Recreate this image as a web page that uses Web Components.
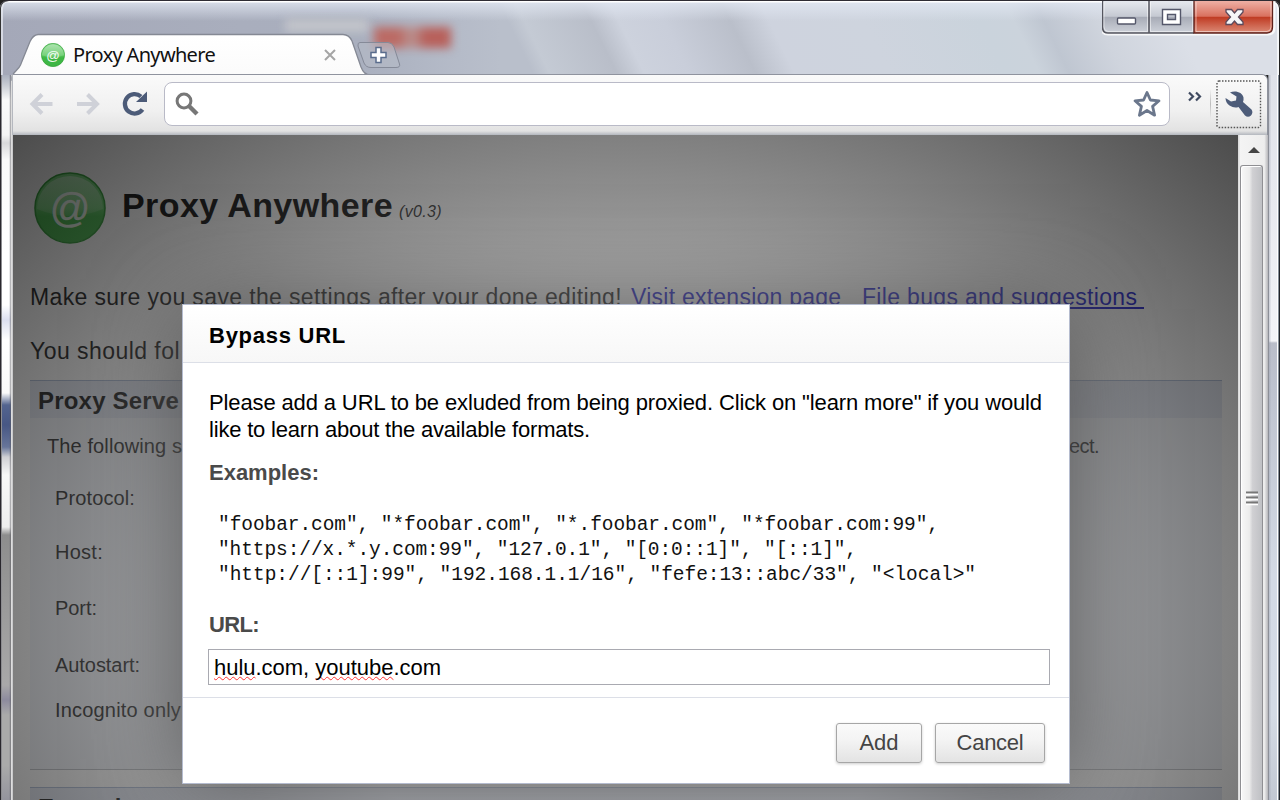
<!DOCTYPE html>
<html lang="en">
<head>
<meta charset="utf-8">
<title>Proxy Anywhere</title>
<style>
html,body{margin:0;width:1280px;height:800px;overflow:hidden;font-family:"Liberation Sans",Arial,sans-serif;background:#222}
</style>
</head>
<body>
<browser-window>
  <tab-strip slot="tabs">Proxy Anywhere</tab-strip>
  <nav-bar slot="toolbar"></nav-bar>
  <options-page slot="page"></options-page>
  <scroll-bar slot="scroll"></scroll-bar>
</browser-window>
<script>
function define(name, html, setup) {
  customElements.define(name, class extends HTMLElement {
    connectedCallback() {
      if (this.shadowRoot) return;
      this.attachShadow({mode: 'open'}).innerHTML = html;
      if (setup) setup(this, this.shadowRoot);
    }
  });
}

/* Window frame: glass title bar, side borders and content area */
define('browser-window', `<style>
:host{display:grid;position:relative;width:1280px;height:800px;grid-template-columns:12px 1px 1225px 26px 4px 12px;grid-template-rows:75px 60px 665px;overflow:hidden}
.title{grid-area:1/1/2/7;display:grid;grid-template-columns:1fr 178px;box-sizing:border-box;border-top:1px solid #2e2c34;position:relative;border-radius:8px 8px 0 0;
 box-shadow:inset 1px 0 #333,inset -1px 0 #222,inset 3px 0 rgba(235,238,245,.7),inset -3px 0 rgba(255,255,255,.7);
 background:
 linear-gradient(180deg,#fff 0 1px,rgba(226,232,243,.75) 2px,rgba(220,226,238,0) 20px),
 linear-gradient(90deg,#a4a8b8 0,#a9aebd 240px,#a9afbe 360px,rgba(178,184,198,.7) 450px,rgba(190,196,208,0) 500px),
 linear-gradient(64deg,#b9bfcb 0 480px,#c4cad4 495px,#b9bec9 555px,#cdd2dd 580px,#c9ceda 620px,#babfca 680px,#ced3de 715px,#ced4de 800px,#cad3dc 905px,#cbd3dc 935px,#bfc6d1 962px,#cfd4dd 1010px,#dbdfe7 1080px)}
.blur{position:absolute;filter:blur(5px)}
.b1{left:285px;top:18px;width:84px;height:13px;background:#c3c5cb}
.b2{left:374px;top:26px;width:77px;height:21px;background:linear-gradient(90deg,#bb6a64 0 25px,#b98a88 34px 42px,#b8605a 50px)}
.left{grid-area:2/1/4/2;background:linear-gradient(90deg,#29272d 0 1px,#8c8c90 1px 2px,transparent 2px 9px,rgba(90,90,100,.25) 10px,rgba(90,90,95,.65) 11px,#ddd 11px),
 linear-gradient(180deg,#aab0be 0,#c8ccd4 10px,#fafafa 25px,#f4f4f4 60px,#d9d9db 68px,#fafafa 85px,#fff 180px,#fff 230px,#dcdff0 245px,#fff 265px,#fafafa 318px,#53648f 330px,#475784 350px,#67759a 372px,#d0d0d4 382px,#f8f8f8 400px,#eee 452px,#8d8d8d 460px,#9c9c9c 540px,#a9a8a9 610px,#8d8b9e 625px,#aaa 640px,#aaa 690px,#94949d 725px)}
.right{grid-area:2/6/4/7;background:linear-gradient(90deg,#8c8f98 0 1px,rgba(150,155,170,.35) 1px 2px,transparent 3px 9px,#fff 9px 10px,#87909a 10px 11px,#202328 11px),
 linear-gradient(180deg,#dfe2e9 0,#e7e9ef 120px,#f3f4f8 266px,#b9bdc9 268px,#bfc4d0 320px,#d3dae5 500px,#d4dbe5 640px,#c2c8d3 725px)}
.bar{grid-area:2/1/3/7;margin:-1px 12px 0 12px;z-index:1}
.edge{grid-area:3/2/4/3;background:#c9c9cb}
.page{grid-area:3/3/4/4;overflow:hidden;position:relative}
.sb{grid-area:3/4/4/5}
.in{grid-area:3/5/4/6;background:linear-gradient(90deg,#f2f2f2,#b6b6ba)}
::slotted(*){height:100%}
</style>
<div class="title"><div class="blur b1"></div><div class="blur b2"></div><slot name="tabs"></slot><caption-buttons></caption-buttons></div>
<div class="left"></div><div class="right"></div>
<div class="bar"><slot name="toolbar"></slot></div>
<div class="edge"></div><div class="page"><slot name="page"></slot></div>
<div class="sb"><slot name="scroll"></slot></div><div class="in"></div>`);

/* Green round "@" badge */
define('at-badge', `<style>:host{display:block}svg{display:block;width:100%;height:100%}text{font:40px "Liberation Sans",sans-serif}</style>
<svg viewBox="0 0 72 72"><defs>
<linearGradient id="g" x2="0" y2="1"><stop offset="0" stop-color="#6fcf74"/><stop offset=".5" stop-color="#5cc961"/><stop offset=".62" stop-color="#3fb845"/><stop offset="1" stop-color="#3fb545"/></linearGradient>
<linearGradient id="h" x2="0" y2="1"><stop offset="0" stop-color="#fff" stop-opacity=".42"/><stop offset="1" stop-color="#fff" stop-opacity=".12"/></linearGradient></defs>
<circle cx="36" cy="36" r="35" fill="url(#g)" stroke="#2a9a30" stroke-width="1.6"/>
<text x="36" y="49.500" text-anchor="middle" fill="#fff" fill-opacity=".9" stroke="#fff" stroke-opacity=".6" stroke-width=".5">@</text>
<path d="M3 37a33 33 0 0 1 66 0Q52 44 36 44T3 37Z" fill="url(#h)"/></svg>`);

define('tab-strip', `<style>
:host{display:flex;position:relative;height:74px;padding-left:12px;align-items:flex-end}
.tab{display:grid;width:352px;height:41px;position:relative}
.tab>*{grid-area:1/1}
.row{display:flex;align-items:center;padding:0 0 0 29px;height:41px;font:20px/28px "Noto Sans","Open Sans",sans-serif;color:#111}
at-badge{width:24px;height:24px;margin-right:8px}
.x{margin-left:109px}
svg{display:block;overflow:visible}
.new{margin:0 0 6px -7px}
</style>
<div class="tab"><svg width="352" height="41"><defs><linearGradient id="t" x2="0" y2="1"><stop offset="0" stop-color="#fff"/><stop offset="1" stop-color="#fafafa"/></linearGradient></defs>
<path d="M0 43.500C0 38 6 37 8.500 31L18 7.500Q21 1 26 .5H331Q337 .5 340 7L349 33Q352 41 358 41V46H0Z" fill="url(#t)" stroke="#858994" stroke-width="1.300"/><path d="M1 41H360V47H1Z" fill="#fafafa"/></svg>
<div class="row"><at-badge></at-badge><fit-text w="142"><slot></slot></fit-text>
<svg class="x" width="12" height="12"><path d="M1 1L11 11M11 1L1 11" stroke="#a5a5a5" stroke-width="2"/></svg></div></div>
<svg class="new" width="44" height="27"><path d="M3 .5H31Q35 .5 37 5L42.500 22Q43.500 25.500 39 25.500H14Q9 25.500 7 21L1 4Q.5 .5 3 .5Z" fill="#b6bbc7" fill-opacity=".6" stroke="#858a98"/>
<path d="M19 5.500h5v5h5v5h-5v5h-5v-5h-5v-5h5z" fill="#fff" stroke="#5a6c8c" stroke-width="1.500"/></svg>`);

define('caption-buttons', `<style>:host{display:block}svg{display:block}</style>
<svg width="178" height="38"><defs>
<linearGradient id="a" x2="0" y2="1"><stop offset="0" stop-color="#e6e9ef"/><stop offset=".48" stop-color="#c5c9d2"/><stop offset=".5" stop-color="#a7abb6"/><stop offset="1" stop-color="#ced2da"/></linearGradient>
<linearGradient id="r" x2="0" y2="1"><stop offset="0" stop-color="#eeb0a5"/><stop offset=".48" stop-color="#d9705e"/><stop offset=".5" stop-color="#bf3a22"/><stop offset="1" stop-color="#dc8c78"/></linearGradient></defs>
<path d="M0 0V27Q0 33 6 33H166Q172 33 172 27V0" fill="none" stroke="#fff" stroke-opacity=".8" stroke-width="3"/>
<path d="M.5 0H47V32H6Q.5 32 .5 26Z" fill="url(#a)"/><path d="M47 0H92V32H47Z" fill="url(#a)"/><path d="M92 0H170V27Q170 32 165 32H92Z" fill="url(#r)"/>
<path d="M.5 0V26Q.5 32 6 32H92M47 0V32" fill="none" stroke="#55565f" stroke-width="1.500"/><path d="M92 0V32H165Q170.500 32 170.500 26V0" fill="none" stroke="#5d211b" stroke-width="1.300"/>
<path d="M2 1V26Q2 30 6 30.500H45.500V1M48.500 1V30.500H90.500V1M94 1V30.500H165Q169 30 169 26V1" fill="none" stroke="#fff" stroke-opacity=".5"/>
<rect x="15.500" y="17" width="18" height="6" rx="1" fill="#fff" stroke="#54576a" stroke-width="1.400"/>
<path d="M60.500 8.500h18v15h-18zM65.500 13.500v5h8v-5z" fill="#fff" fill-rule="evenodd" stroke="#54576a" stroke-width="1.400"/>
<path d="M124 8.500h5.500l3 3.500 3-3.500h5.500v2.500l-4.500 5 4.500 5v2.500h-5.500l-3-3.500-3 3.500H124V21l4.500-5-4.500-5z" fill="#f6f6f8" stroke="#5b4a5c" stroke-width="1.300"/>
</svg>`);

define('nav-bar', `<style>
:host{display:flex;box-sizing:border-box;height:61px;border:solid #8f939e;border-width:1px 1px 0 0;border-radius:0 6px 0 0;background:linear-gradient(#fafafa,#f0f0f0 60%,#e2e2e2 56px,#b3b7be 60px);align-items:center;border-left:1px solid #b5b8bf;padding-bottom:3px}
svg{display:block;flex:none;overflow:visible}
.omni{display:flex;align-items:center;justify-content:space-between;box-sizing:border-box;width:1006px;height:44px;border:1px solid #b9bac7;border-radius:8px;background:#fff;padding:0 8px 0 10px;margin-left:16px}
.more{margin:-15px 0 0 18px}
.sep{width:1px;height:30px;margin-left:8px;background:linear-gradient(transparent,#bbb,transparent)}
.wr{display:grid;flex:none;margin:1px 0 0 5px}
.wr>*{grid-area:1/1}
.wr .icon{place-self:center}
</style>
<svg width="24" height="24" style="margin-left:16px"><path d="M23.500 12H3.500M13 2.500L3.500 12L13 21.500" fill="none" stroke="#cfd1d8" stroke-width="4"/></svg>
<svg width="24" height="24" style="margin-left:23px"><path d="M1 12H21M11.500 2.500L21 12L11.500 21.500" fill="none" stroke="#cfd1d8" stroke-width="4"/></svg>
<svg width="26" height="26" style="margin-left:22px"><path d="M20.500 18.500A9.700 9.700 0 1 1 19 5.500" fill="none" stroke="#4c5b78" stroke-width="4.300"/><path d="M25 .5V11H14Z" fill="#4c5b78"/></svg>
<div class="omni"><svg width="24" height="24"><circle cx="9" cy="9" r="6.900" fill="none" stroke="#777" stroke-width="3"/><path d="M14 14L22 22" stroke="#777" stroke-width="4.500"/></svg>
<svg width="28" height="28"><path d="M14 2.500L17.400 10L26 10.800L19.600 16.400L21.600 25.200L14 20.500L6.400 25.200L8.400 16.400L2 10.800L10.600 10Z" fill="#fff" stroke="#6b778c" stroke-width="2.800" stroke-linejoin="round"/></svg></div>
<svg class="more" width="14" height="9"><path d="M1 .5L5 4.500L1 8.500M8 .5L12 4.500L8 8.500" fill="none" stroke="#3f4a60" stroke-width="2.200"/></svg>
<div class="sep"></div>
<div class="wr"><svg width="46" height="49"><rect x="1" y="1" width="43.500" height="46.500" rx="2" fill="none" stroke="#555" stroke-width="1.400" stroke-dasharray="1.500 1.500"/></svg>
<svg class="icon" width="28" height="28"><path d="M5 2.500C10 0 17.500 2 18.500 7.500Q18.800 10 18 12L26.500 19.500Q28.500 22.500 26 25.500Q23 28 20 25.500L13.500 17Q9 18.500 4.500 15.500Q.5 12.500 .5 8L6 11.500L11 10.500L11.500 6.500Z" fill="#4d5c79"/></svg></div>`);

define('scroll-bar', `<style>
:host{display:flex;flex-direction:column;align-items:stretch;box-sizing:border-box;height:665px;background:linear-gradient(90deg,#dcdcdc 0 1px,#f4f4f4 2px,#ededed)}
.up{height:30px;display:grid;place-items:center;padding-left:5px}
.th{flex:1;margin:0 1px 0 2px;border:1px solid #8f8f93;border-bottom:0;border-radius:3px 3px 0 0;background:linear-gradient(90deg,#f8f8f8,#ececec 40%,#d0d0d3 55%,#bfc0c4);display:grid;justify-items:center;padding-top:325px;box-sizing:border-box;align-content:start;box-shadow:inset 1px 1px #fff}
</style>
<div class="up"><svg width="14" height="8"><path d="M1 7L7 1L13 7Z" fill="#444"/></svg></div>
<div class="th"><svg width="14" height="15"><path d="M1 1.500H13M1 6.500H13M1 11.500H13" stroke="#777" stroke-width="2"/><path d="M1 3.500H13M1 8.500H13M1 13.500H13" stroke="#fff" stroke-width="1.500"/></svg></div>`);

define('options-page', `<style>
:host{display:block;position:relative;height:1000px!important;background:#fff;color:#222}
.body{display:flex;flex-direction:column;padding:37px 16px 0 17px}
.head{display:flex;height:72px;padding-left:4px}
.head at-badge{width:72px;height:72px;margin-right:16px}
h1{margin:13px 0 0;font-size:34px;line-height:40px;white-space:pre;color:#000}
i{font-size:16px;font-weight:400;margin-left:6px;color:#222}
p{margin:39px 0 0;font-size:23px;line-height:28px;white-space:pre;display:flex;color:#111}
p+p{margin-top:26px}
a{color:#11c;text-decoration:underline;text-decoration-thickness:1.500px;text-underline-offset:2px}
.shade{position:absolute;inset:0;background:radial-gradient(rgba(127,127,127,.5),rgba(127,127,127,.5) 35%,rgba(0,0,0,.7))}
bypass-dialog{position:absolute;left:169px;top:169px}
settings-section{margin-top:15px}
settings-section+settings-section{margin-top:17px}
.desc{display:flex;margin:14px 0 0 17px;height:28px}
dl{margin:24px 0 45px 25px;display:grid;row-gap:0}
dt{height:28px}
</style>
<div class="body">
<div class="head"><at-badge></at-badge><h1><fit-text w="271">Proxy Anywhere</fit-text><i><fit-text w="43">(v0.3)</fit-text></i></h1></div>
<p><fit-text w="592">Make sure you save the settings after your done editing!</fit-text><a style="margin-left:9px"><fit-text w="217">Visit extension page&nbsp;</fit-text></a><a style="margin-left:14px"><fit-text w="282">File bugs and suggestions&nbsp;</fit-text></a></p>
<p><fit-text w="150">You should fol</fit-text></p>
<settings-section><fit-text slot="title" w="141">Proxy Serve</fit-text>
<div class="desc"><fit-text w="135">The following s</fit-text><fit-text w="30" style="margin-left:887px">ect.</fit-text></div>
<dl><dt><fit-text w="80">Protocol:</fit-text></dt><dt style="margin-top:26px"><fit-text w="48">Host:</fit-text></dt><dt style="margin-top:28px"><fit-text w="42">Port:</fit-text></dt><dt style="margin-top:29px"><fit-text w="85">Autostart:</fit-text></dt><dt style="margin-top:17px"><fit-text w="126">Incognito only</fit-text></dt></dl>
</settings-section>
<settings-section><fit-text slot="title" w="125">Exceptions</fit-text></settings-section>
</div>
<div class="shade"></div>
<bypass-dialog></bypass-dialog>`);

define('settings-section', `<style>
:host{display:block;background:#f4f7fd;border-bottom:1px solid #b9bcc2;font-size:20px;line-height:28px;color:#222;box-sizing:border-box}
header{height:37px;border-top:1px solid #a8b8d4;background:#e3e8f4;font-weight:700;font-size:24px;line-height:40px;padding-left:8px;color:#111}
</style><header><slot name="title"></slot></header><slot></slot>`);

define('bypass-dialog', `<style>
:host{display:flex;flex-direction:column;box-sizing:border-box;width:888px;height:480px;background:#fff;border:1.500px solid #b5bccf;box-shadow:0 5px 84px rgba(70,70,70,.8);color:#000;font-size:22px}
header{height:58px;box-sizing:border-box;border-bottom:1.500px solid #dcdfe7;background:linear-gradient(#fff,#f7f7f7);padding:0 26px;font-weight:700;line-height:62px}
main{padding:26px 19px 0 26px;height:335px;box-sizing:border-box;border-bottom:1.500px solid #dcdfe7;line-height:27px}
.b{font-weight:700;color:#4a4a4a;display:block}
pre{margin:27px 0 0 9px;font:19.500px/25px "Liberation Mono",monospace;color:#111}
pre fit-text{display:block}
.input{display:flex;align-items:center;height:36px;box-sizing:border-box;border:1.500px solid #a9aab1;margin-top:11px;padding:2px 0 0 5px;margin-left:-1px;line-height:34px}
.sp{text-decoration:underline wavy #f33;text-decoration-thickness:1.200px;text-underline-offset:1px;text-decoration-skip-ink:none}
footer{display:flex;justify-content:flex-end;gap:13px;padding:25px 24px 0}
</style>
<header><fit-text w="137">Bypass URL</fit-text></header>
<main><fit-text w="833">Please add a URL to be exluded from being proxied. Click on "learn more" if you would</fit-text><br><fit-text w="381">like to learn about the available formats.</fit-text>
<div class="b" style="margin-top:16px"><fit-text w="110">Examples:</fit-text></div>
<pre><fit-text w="721">"foobar.com", "*foobar.com", "*.foobar.com", "*foobar.com:99",</fit-text><fit-text w="639">"https://x.*.y.com:99", "127.0.1", "[0:0::1]", "[::1]",</fit-text><fit-text w="758">"http://[::1]:99", "192.168.1.1/16", "fefe:13::abc/33", "&lt;local&gt;"</fit-text></pre>
<div class="b" style="margin-top:23px"><fit-text w="50">URL:</fit-text></div>
<div class="input"><fit-text w="227"><span class="sp">hulu</span>.com, <span class="sp">youtube</span>.com</fit-text></div></main>
<footer><push-button><fit-text w="39">Add</fit-text></push-button><push-button style="width:110px"><fit-text w="67">Cancel</fit-text></push-button></footer>`);

define('push-button', `<style>
:host{display:grid;place-items:center;box-sizing:border-box;width:86px;height:40px;border:1.500px solid #a6a6a6;border-radius:3px;background:linear-gradient(#fafafa,#f4f4f4 40%,#e3e3e3);box-shadow:0 1px 3px rgba(0,0,0,.2);color:#444;line-height:38px}
</style><slot></slot>`);

/* One line of text, tracked so that it takes exactly w pixels */
define('fit-text', `<style>:host{display:inline-block;white-space:pre;text-decoration:inherit;width:max-content!important}</style><slot></slot>`, host => {
  const slot = host.querySelector('slot');
  const n = (slot ? slot.assignedNodes().map(x => x.textContent).join('') : host.textContent).length;
  const natural = host.getBoundingClientRect().width;
  host.style.letterSpacing = ((+host.getAttribute('w') - natural) / n).toFixed(3) + 'px';
});
</script>
</body>
</html>
